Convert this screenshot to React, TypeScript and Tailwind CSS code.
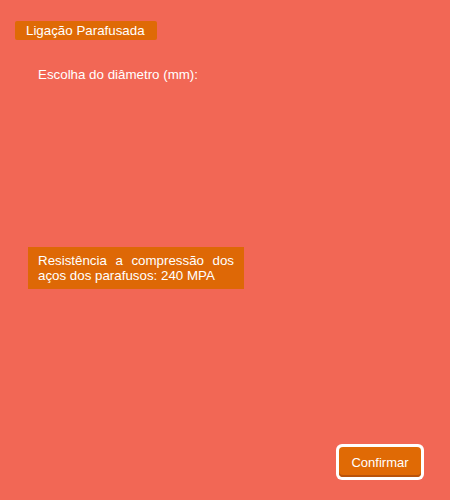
const App = () => {
  return (
    <div
      className="flex flex-col w-[450px] h-[500px] bg-[#f26755] text-white text-[13.33px]"
      style={{ fontFamily: '"Liberation Sans", Arial, sans-serif' }}
    >
      {/* Title */}
      <div className="ml-[15px] mt-[21px] w-[142px] h-[19px] px-[11px] leading-[19px] rounded-[2px] bg-[#df6a06]">
        Ligação Parafusada
      </div>

      <p className="ml-[38px] mt-[26px] leading-[17px]">Escolha do diâmetro (mm):</p>

      {/* Info box */}
      <div className="ml-[28px] mt-[164px] w-[216px] px-[10px] py-[6px] leading-[15px] text-justify bg-[#de6806]">
        Resistência a compressão dos aços dos parafusos: 240 MPA
      </div>

      <div className="mt-auto flex justify-end pr-[26px] pb-[20px]">
        <button className="h-[36px] w-[88px] rounded-[6px] bg-white p-[3px]">
          <span className="flex h-full w-full items-center justify-center rounded-[4px] bg-[#e06a05] text-[13px] text-white leading-none shadow-[inset_0_-2px_0_#b9530a]">
            Confirmar
          </span>
        </button>
      </div>
    </div>
  );
};

export default App;
